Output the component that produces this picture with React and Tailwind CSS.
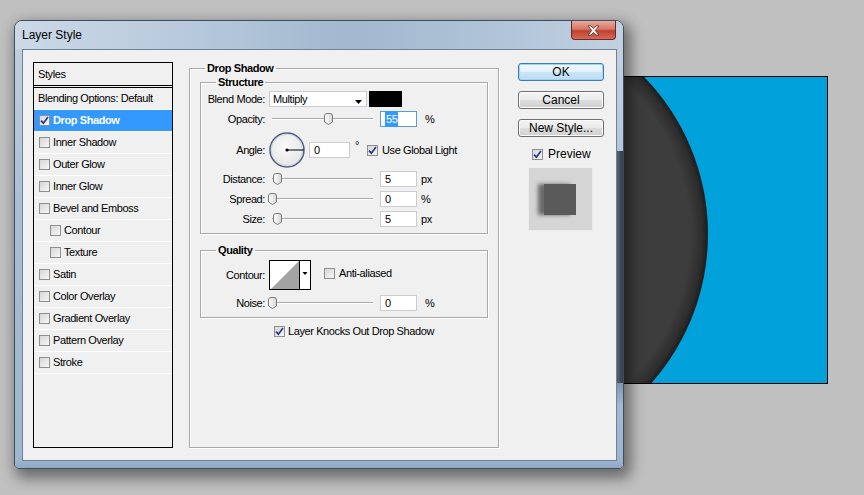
import React from "react";

const styleRows = [
  { label: "Drop Shadow", checked: true, selected: true },
  { label: "Inner Shadow" },
  { label: "Outer Glow" },
  { label: "Inner Glow" },
  { label: "Bevel and Emboss" },
  { label: "Contour", indent: true },
  { label: "Texture", indent: true },
  { label: "Satin" },
  { label: "Color Overlay" },
  { label: "Gradient Overlay" },
  { label: "Pattern Overlay" },
  { label: "Stroke" },
];

const Check = ({ checked }) => (
  <span className="flex h-[11px] w-[11px] shrink-0 items-center justify-center border border-[#8e8f8f] bg-[linear-gradient(135deg,#d6d6d6,#f7f7f7)]">
    {checked && (
      <svg width="9" height="9" viewBox="0 0 9 9">
        <path d="M1 4.6 L3.4 7.2 L8 1" stroke="#27398a" strokeWidth="1.7" fill="none" />
      </svg>
    )}
  </span>
);

const Thumb = () => (
  <svg width="9" height="12" viewBox="0 0 9 12">
    <defs>
      <linearGradient id="th" x1="0" y1="0" x2="1" y2="0">
        <stop offset="0" stopColor="#ffffff" />
        <stop offset="1" stopColor="#d4d4d4" />
      </linearGradient>
    </defs>
    <path d="M0.5 3 Q0.5 0.5 3 0.5 H6 Q8.5 0.5 8.5 3 V9 L4.5 11.5 L0.5 9 Z" fill="url(#th)" stroke="#7a7a7a" />
  </svg>
);

// slider: track 101px, thumb position from value fraction
const Slider = ({ value }) => (
  <div className="relative ml-[3px] h-[14px] w-[112px]">
    <div className="absolute left-[4px] top-[6px] h-[2px] w-[101px] border-t border-[#a8a8a8] border-b border-b-white" />
    <div className="absolute top-[1px]" style={{ left: Math.round(value * 101) }}>
      <Thumb />
    </div>
  </div>
);

const Field = ({ children, w = "w-[37px]", focus }) => (
  <div
    className={`flex h-[16px] ${w} items-center border bg-white pl-[4px] text-[11px] ${
      focus ? "border-[#5b9bd5]" : "border-[#c9ccd3]"
    }`}
  >
    {children}
  </div>
);

const Label = ({ children }) => (
  <div className="w-[64px] shrink-0 text-right">{children}</div>
);

const SliderRow = ({ label, value, num, unit, unitGap, focus, className }) => (
  <div className={`flex h-[16px] items-center ${className}`}>
    <Label>{label}</Label>
    <Slider value={value} />
    <Field focus={focus}>
      {focus ? <span className="bg-[#3399ff] px-[1px] text-white">{num}</span> : num}
    </Field>
    <span className={unitGap}>{unit}</span>
  </div>
);

const Canvas = () => (
  <svg className="absolute left-[560px] top-[70px]" width="280" height="320" viewBox="0 0 280 320">
    <defs>
      <radialGradient id="disc" cx="-77" cy="164" r="225" gradientUnits="userSpaceOnUse">
        <stop offset="0.92" stopColor="#3d3d3d" />
        <stop offset="0.975" stopColor="#2d2d2d" />
        <stop offset="1" stopColor="#1c1c1c" />
      </radialGradient>
      <clipPath id="doc">
        <rect x="0" y="7" width="267" height="306" />
      </clipPath>
    </defs>
    <rect x="0" y="6.5" width="267.5" height="307" fill="#01a2dc" stroke="#000" />
    <circle cx="-77" cy="164" r="225" fill="url(#disc)" clipPath="url(#doc)" />
  </svg>
);

const Button = ({ children, primary, className }) => (
  <button
    className={`flex h-[18px] w-[86px] items-center justify-center rounded-[3px] border text-[12px] ${
      primary
        ? "border-[#3c7fb1] bg-[linear-gradient(180deg,#f1f8fd_0%,#e3f1fb_50%,#cbe6f7_51%,#bcdcf1_100%)] shadow-[inset_0_0_0_1px_#9fd3f5]"
        : "border-[#707070] bg-[linear-gradient(180deg,#f3f3f3_0%,#ebebeb_50%,#dddddd_51%,#d0d0d0_100%)] shadow-[inset_0_0_0_1px_#fcfcfc]"
    } ${className}`}
  >
    {children}
  </button>
);

const groupBox =
  "border border-[#a9a9a9] shadow-[inset_1px_1px_0_white,1px_1px_0_white]";

export default function App() {
  return (
    <div className="relative h-[495px] w-[864px] overflow-hidden bg-[#c0c0c0] font-['Liberation_Sans',Arial,sans-serif] text-[11px] tracking-[-0.4px] text-black">
      <Canvas />

      {/* Layer Style window */}
      <div className="absolute left-[14px] top-[20px] flex h-[449px] w-[610px] flex-col overflow-hidden rounded-t-[8px] rounded-b-[5px] border border-[#3e4d5f] shadow-[4px_6px_14px_3px_rgba(0,0,0,0.45)]">
        <div className="flex h-[28px] shrink-0 items-start justify-between bg-[linear-gradient(90deg,#cbd9e7_0%,#b6c8db_30%,#a2b8cf_55%,#b1c4d8_80%,#c2d1e1_100%)]">
          <span className="mt-[7px] pl-[7px] text-[12px] leading-[14px] tracking-normal">Layer Style</span>
          <div className="mr-[7px] flex h-[19px] w-[45px] items-center justify-center rounded-b-[4px] border border-t-0 border-[#6b2a22] bg-[linear-gradient(180deg,#e7a99e_0%,#d77766_45%,#c2402f_55%,#d46a58_100%)]">
            <svg width="13" height="11" viewBox="0 0 13 11">
              <path
                d="M1 1 H4 L6.5 3.6 L9 1 H12 L8.2 5.5 L12 10 H9 L6.5 7.4 L4 10 H1 L4.8 5.5 Z"
                fill="#fff"
                stroke="#5a2a24"
                strokeWidth="0.8"
              />
            </svg>
          </div>
        </div>

        <div className="flex h-[412px] shrink-0">
          <div className="w-[7px] bg-[linear-gradient(180deg,#c0cedd,#a9bdd3_40%,#9fb6cf)]" />

          {/* client area */}
          <div className="flex w-[595px] items-start border border-[#6f8195] bg-[#f0f0f0]">
            {/* styles list */}
            <div className="ml-[10px] mt-[12px] flex h-[386px] w-[140px] flex-col border border-black">
              <div className="flex h-[23px] shrink-0 items-center border-b border-black pl-[4px]">Styles</div>
              <div className="h-[2px] shrink-0 border-b border-black" />
              <div className="flex h-[22px] shrink-0 items-center border-b border-white pl-[4px]">
                Blending Options: Default
              </div>
              {styleRows.map((r) => (
                <div
                  key={r.label}
                  className={`flex h-[22px] shrink-0 items-center gap-[3px] border-b border-white ${
                    r.indent ? "pl-[16px]" : "pl-[5px]"
                  } ${r.selected ? "bg-[#3399ff] font-bold text-white" : ""}`}
                >
                  <Check checked={r.checked} />
                  <span>{r.label}</span>
                </div>
              ))}
            </div>

            {/* Drop Shadow group */}
            <fieldset className={`ml-[16px] mt-[12px] h-[386px] w-[310px] px-[10px] ${groupBox}`}>
              <legend className="ml-[5px] px-[2px] text-[11px] font-bold leading-[13px]">Drop Shadow</legend>

              <fieldset className={`mt-[1px] pb-[6px] ${groupBox}`}>
                <legend className="ml-[15px] px-[2px] font-bold leading-[13px]">Structure</legend>
                <div className="mt-[2px] flex h-[16px] items-center">
                  <Label>Blend Mode:</Label>
                  <div className="ml-[4px] flex h-[16px] w-[98px] items-center justify-between border border-[#c9ccd3] bg-white pl-[3px] pr-[4px]">
                    <span>Multiply</span>
                    <svg width="7" height="4" viewBox="0 0 7 4" className="mt-[6px]">
                      <path d="M0 0 H7 L3.5 4 Z" fill="#000" />
                    </svg>
                  </div>
                  <div className="ml-[2px] h-[16px] w-[33px] bg-black" />
                </div>

                <SliderRow className="mt-[4px]" label="Opacity:" value={0.55} num="55" unit="%" unitGap="ml-[8px]" focus />

                <div className="mt-[5px] flex h-[36px] items-center">
                  <Label>Angle:</Label>
                  <svg width="36" height="36" viewBox="0 0 36 36" className="ml-[4px]">
                    <defs>
                      <radialGradient id="dial" cx="0.45" cy="0.4" r="0.6">
                        <stop offset="0" stopColor="#fbfbfb" />
                        <stop offset="1" stopColor="#e4e4e4" />
                      </radialGradient>
                    </defs>
                    <circle cx="18" cy="18" r="17" fill="url(#dial)" stroke="#4c5f80" strokeWidth="1.5" />
                    <circle cx="18" cy="18" r="15.8" fill="none" stroke="#c9d0dc" strokeWidth="0.8" />
                    <line x1="18" y1="18" x2="35" y2="18" stroke="#000" strokeWidth="1" />
                    <circle cx="18" cy="18" r="1.6" fill="#000" />
                  </svg>
                  <div className="ml-[4px]">
                    <Field w="w-[41px]">0</Field>
                  </div>
                  <span className="mb-[10px] ml-[5px]">°</span>
                  <div className="ml-[8px] flex items-center gap-[4px]">
                    <Check checked />
                    <span>Use Global Light</span>
                  </div>
                </div>

                <SliderRow className="mt-[3px]" label="Distance:" value={0.05} num="5" unit="px" unitGap="ml-[4px]" />
                <SliderRow className="mt-[4px]" label="Spread:" value={0} num="0" unit="%" unitGap="ml-[4px]" />
                <SliderRow className="mt-[4px]" label="Size:" value={0.05} num="5" unit="px" unitGap="ml-[4px]" />
              </fieldset>

              <fieldset className={`mt-[10px] pb-[6px] ${groupBox}`}>
                <legend className="ml-[15px] px-[2px] font-bold leading-[13px]">Quality</legend>
                <div className="mt-[3px] flex h-[30px] items-center">
                  <Label>Contour:</Label>
                  <svg width="42" height="30" viewBox="0 0 42 30" className="ml-[4px]">
                    <rect x="0.5" y="0.5" width="41" height="29" fill="#fff" stroke="#000" />
                    <path d="M2 29 L30 1 L30 29 Z" fill="#a3a3a3" />
                    <line x1="30.5" y1="0" x2="30.5" y2="30" stroke="#000" />
                    <path d="M33.5 12 H38.5 L36 15 Z" fill="#000" />
                  </svg>
                  <div className="mb-[4px] ml-[13px] flex items-center gap-[4px]">
                    <Check />
                    <span>Anti-aliased</span>
                  </div>
                </div>
                <SliderRow className="mt-[5px]" label="Noise:" value={0} num="0" unit="%" unitGap="ml-[8px]" />
              </fieldset>

              <div className="ml-[74px] mt-[7px] flex h-[13px] items-center gap-[3px]">
                <Check checked />
                <span>Layer Knocks Out Drop Shadow</span>
              </div>
            </fieldset>

            {/* buttons + preview */}
            <div className="ml-[19px] mt-[13px] flex w-[86px] flex-col text-[12px] tracking-normal">
              <Button primary>OK</Button>
              <Button className="mt-[10px]">Cancel</Button>
              <Button className="mt-[10px]">New Style...</Button>
              <div className="mt-[10px] flex h-[14px] items-center gap-[5px] pl-[14px]">
                <Check checked />
                <span>Preview</span>
              </div>
              <div className="ml-[10px] mt-[6px] h-[64px] w-[65px] border border-[#ececec] bg-[#d5d5d5] pl-[15px] pt-[16px]">
                <div className="h-[31px] w-[32px] bg-[#5a5a5a] shadow-[-6px_0_4px_rgba(0,0,0,0.5)]" />
              </div>
            </div>
          </div>

          {/* right frame, darkened where the canvas is behind the glass */}
          <div className="flex w-[6px] flex-col">
            <div className="h-[102px] bg-[linear-gradient(180deg,#c4d2e0,#b4c6d8)]" />
            <div className="h-[232px] bg-[linear-gradient(90deg,#56626f,#343d47)]" />
            <div className="flex-1 bg-[linear-gradient(180deg,#7f95ad,#a3bad3_30%,#9cb4ce)]" />
          </div>
        </div>

        <div className="flex-1 bg-[linear-gradient(180deg,#9db5cf,#8ea7c3)]" />
      </div>
    </div>
  );
}
